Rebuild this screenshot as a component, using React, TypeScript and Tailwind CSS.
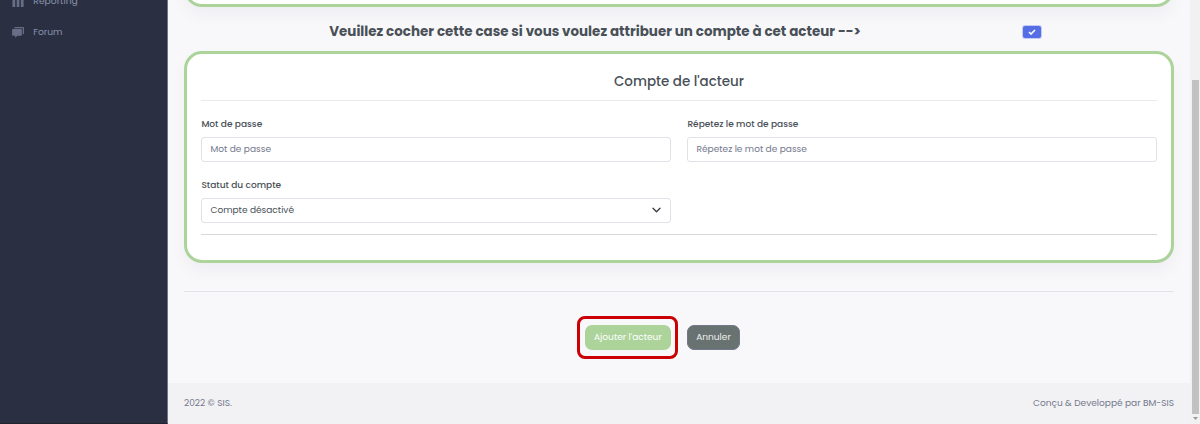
import React from 'react';

function Field({ label, children }: { label: string; children: React.ReactNode }) {
  return (
    <div className="w-[470px]">
      <div className="flex h-[14px] items-center pl-[0.4px] whitespace-nowrap text-[9.03px] font-medium text-[#495057]">{label}</div>
      <div className="mt-[5px] flex h-[25px] items-center justify-between rounded-[3px] border border-[#dfe2e6] bg-white pr-[9px] pl-[8.5px] text-[9.03px] leading-[13px]">
        {children}
      </div>
    </div>
  );
}

function ForumIcon() {
  return (
    <svg className="h-[11px] w-[12px]" viewBox="0 0 12 11" fill="#686e86">
      <path d="M3 0h8a1 1 0 0 1 1 1v6h-1.2V1.3H2.3V.7A.7.7 0 0 1 3 0z" />
      <path d="M1 2h8a.9.9 0 0 1 .9.9v4.9a.9.9 0 0 1-.9.9H5.2L3.2 11V8.7H1a.9.9 0 0 1-.9-.9V2.9A.9.9 0 0 1 1 2z" />
    </svg>
  );
}

function ReportingIcon() {
  return (
    <svg className="h-[11px] w-[12px]" viewBox="0 0 12 11" fill="#686e86">
      <path d="M.5 4h2.7v7H.5zM4.7 0h2.7v11H4.7zM8.9 2h2.7v9H8.9z" />
    </svg>
  );
}

export default function App() {
  return (
    <div className="flex h-[424px] w-[1200px] overflow-hidden bg-[#f8f8fb] font-[Poppins,Inter,sans-serif] text-[#495057]">
      <aside className="flex h-full w-[168px] shrink-0 flex-col border-r border-b border-r-[#70758a] border-b-[#22232f] bg-[#2a3042] text-[9.2px] text-[#8990ac]">
        <div className="mt-[-7px] flex h-[16px] items-center gap-[9px] pl-[12.3px]">
          <ReportingIcon />
          <span>Reporting</span>
        </div>
        <div className="mt-[15px] flex h-[16px] items-center gap-[9px] pl-[12.3px]">
          <ForumIcon />
          <span>Forum</span>
        </div>
      </aside>

      <main className="flex w-[1022px] shrink-0 flex-col">
        <div className="flex h-[383px] flex-col px-[16px]">
          <div className="mt-[-53px] h-[60px] shrink-0 rounded-[18px] border-[3px] border-[#abd39a] bg-white shadow-[0_8px_16px_rgba(18,38,63,0.04)]" />
          <div className="flex h-[44px] shrink-0 items-center pt-[5px]">
            <div className="w-[822px] text-center text-[13.46px] leading-[20px] font-bold whitespace-nowrap">
              Veuillez cocher cette case si vous voulez attribuer un compte à cet acteur --&gt;
            </div>
            <div className="ml-[17px] flex h-[12px] w-[17.5px] items-center justify-center rounded-[2px] bg-[#556ee6] shadow-[0_0_0_1px_#c6cdf5]">
              <svg className="h-[6px] w-[8px]" viewBox="0 0 8 6" fill="none" stroke="#fff" strokeWidth="1.6">
                <path d="M1 3l2 2 4-4" />
              </svg>
            </div>
          </div>

          <section className="h-[212px] shrink-0 rounded-[18px] border-[3px] border-[#abd39a] bg-white px-[14px] shadow-[0_8px_16px_rgba(18,38,63,0.04)]">
            <h4 className="mt-[18px] text-center text-[13.46px] leading-[20px] font-medium">Compte de l'acteur</h4>
            <div className="mt-[8px] h-px bg-[#e9eaeb]" />
            <div className="mt-[17px] flex justify-between">
              <Field label="Mot de passe"><span className="text-[#74788d]">Mot de passe</span></Field>
              <Field label="Répetez le mot de passe"><span className="text-[#74788d]">Répetez le mot de passe</span></Field>
            </div>
            <div className="mt-[16.5px]">
              <Field label="Statut du compte">
                <span>Compte désactivé</span>
                <svg className="mb-px h-[8px] w-[9px]" viewBox="0 0 9 8" fill="none" stroke="#343a40" strokeWidth="1.3" strokeLinecap="round" strokeLinejoin="round">
                  <path d="M1 2.3l3.5 3.4L8 2.3" />
                </svg>
              </Field>
            </div>
            <div className="mt-[11.5px] h-px bg-[#d7d9da]" />
          </section>

          <div className="mt-[28px] h-px shrink-0 bg-[#e2e3e6]" />
          <div className="mt-[24px] flex shrink-0 items-center pl-[393px] text-[9.03px] leading-[13px]">
            <div className="flex h-[43px] w-[101px] items-center justify-center rounded-[8px] border-[3px] border-[#cb0005]">
              <button className="ml-[0.8px] h-[25px] w-[85.5px] shrink-0 rounded-[7px] bg-[#abd39a] pb-px whitespace-nowrap text-white">Ajouter l'acteur</button>
            </div>
            <button className="ml-[9px] h-[25px] w-[53px] rounded-[7px] border border-[#74788d] bg-[#687270] pb-px whitespace-nowrap text-[#eef0ef]">Annuler</button>
          </div>
        </div>
        <footer className="flex h-[41px] items-center justify-between bg-[#f2f2f4] px-[16px] pb-px text-[9.03px] leading-[13px] text-[#74788d]">
          <span>2022 © SIS.</span>
          <span>Conçu &amp; Developpé par BM-SIS</span>
        </footer>
      </main>

      <div className="flex w-[10px] flex-col items-center bg-[#f1f1f1]">
        <div className="mt-[80px] h-[334px] w-[7px] shrink-0 bg-[#c1c1c1]" />
        <svg className="mt-[3px] h-[3px] w-[5px]" viewBox="0 0 5 3" fill="#9a9a9a"><path d="M0 0h5L2.5 3z" /></svg>
      </div>
    </div>
  );
}
